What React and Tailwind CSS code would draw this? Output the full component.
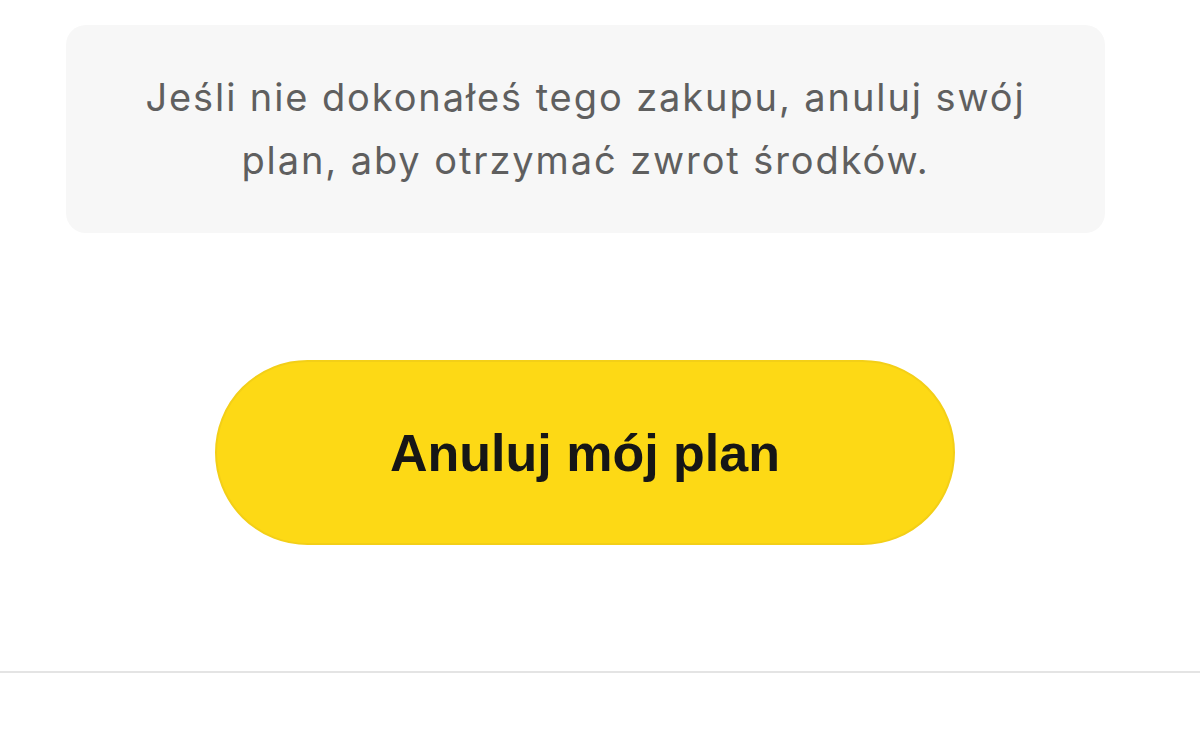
import React from "react";

function RefundNotice() {
  return (
    <div className="flex h-[208px] w-[1039px] items-center justify-center rounded-[20px] bg-[#f7f7f7] px-10">
      <p
        className="text-center text-[38px] leading-[63px] tracking-[1.9px] text-[#5f5f5f]"
        style={{ fontFamily: "Inter, 'Liberation Sans', sans-serif" }}
      >
        Jeśli nie dokonałeś tego zakupu, anuluj swój
        <br />
        plan, aby otrzymać zwrot środków.
      </p>
    </div>
  );
}

function App() {
  return (
    <div
      className="flex min-h-screen flex-col bg-white"
      style={{ fontFamily: '"Liberation Sans", Arial, sans-serif' }}
    >
      <div className="pl-[66px] pt-[25px]">
        <RefundNotice />
      </div>

      <div className="flex justify-center pt-[127px]">
        <button
          type="button"
          className="mr-[30px] h-[185px] w-[740px] rounded-full border-2 border-[#f3cf17] bg-[#fdd915] text-[52px] font-bold text-[#161616]"
        >
          Anuluj mój plan
        </button>
      </div>

      <div className="mt-[126px] h-[2px] w-full bg-[#e4e4e4]" />
    </div>
  );
}

export default App;
